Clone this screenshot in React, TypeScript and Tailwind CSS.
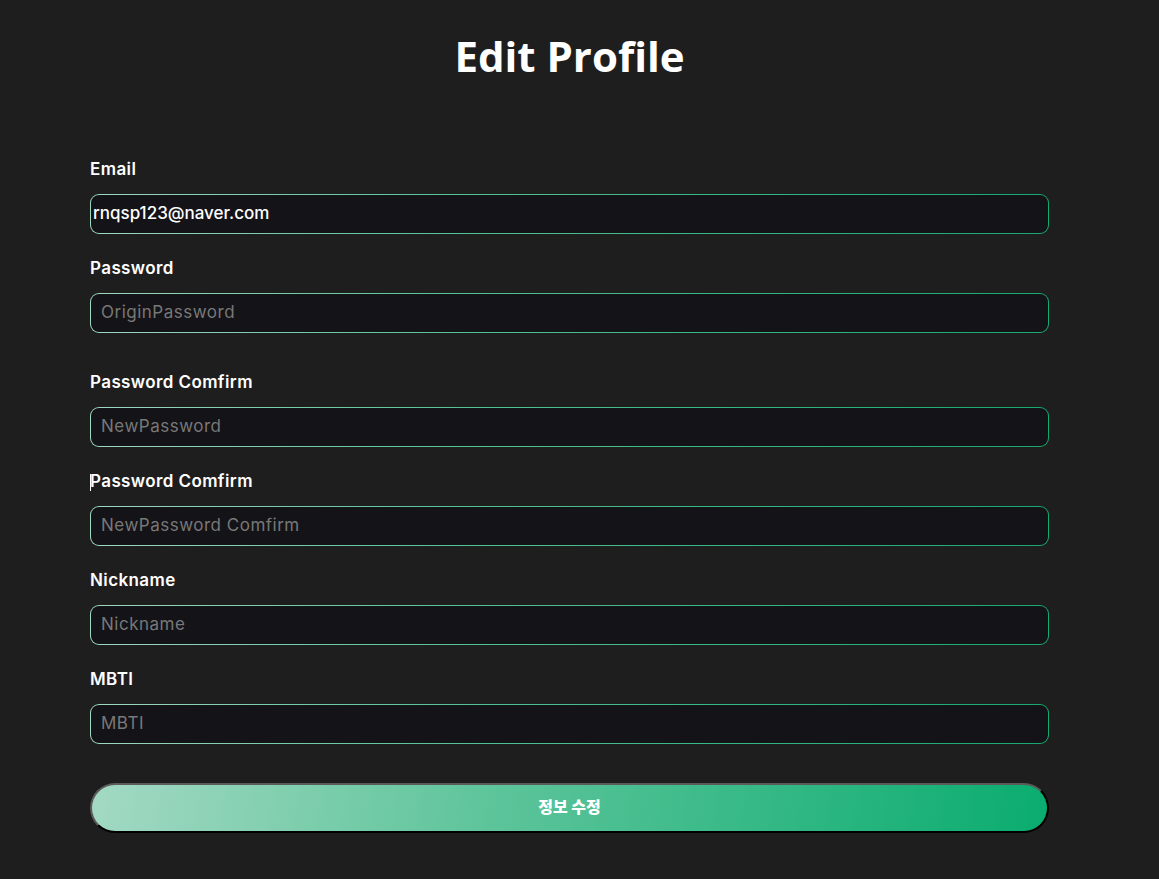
import React from "react";

const font = { fontFamily: '"Inter", "Noto Sans CJK KR", sans-serif' };

function Field({
  label,
  placeholder,
  value,
  caret,
  className = "",
}: {
  label: string;
  placeholder?: string;
  value?: string;
  caret?: boolean;
  className?: string;
}) {
  return (
    <div className={"flex flex-col " + className}>
      <div className="relative h-[20px] text-[17px] leading-[20px] font-semibold text-white mb-[15px] tracking-[0.4px]">
        {caret && <span className="absolute left-0 top-[3px] h-[17px] w-px bg-white" />}
        {label}
      </div>
      <div className="rounded-[9px] p-px bg-[linear-gradient(90deg,#9fd8c1,#52c393_40%,#16a96f)]">
        <div className="h-[38px] rounded-[8px] bg-[#141317] flex items-center">
          {value ? (
            <span className="pl-[2px] text-[17px] font-medium text-white">{value}</span>
          ) : (
            <span className="pl-[10px] text-[17px] tracking-[0.5px] text-[#787878]">{placeholder}</span>
          )}
        </div>
      </div>
    </div>
  );
}

export default function App() {
  return (
    <div className="min-h-[879px] w-full bg-[#1e1e1e]" style={font}>
      <div className="w-[959px] ml-[90px] flex flex-col">
        <h1
          className="text-center text-[42px] font-bold text-white pt-[28px] leading-[56px]"
          style={{ fontFamily: '"Open Sans", "Noto Sans", sans-serif' }}
        >
          Edit Profile
        </h1>
        <div className="mt-[75px] flex flex-col gap-[24px]">
          <Field label="Email" value="rnqsp123@naver.com" />
          <Field label="Password" placeholder="OriginPassword" />
          <Field label="Password Comfirm" placeholder="NewPassword" className="mt-[15px]" />
          <Field label="Password Comfirm" placeholder="NewPassword Comfirm" caret />
          <Field label="Nickname" placeholder="Nickname" />
          <Field label="MBTI" placeholder="MBTI" />
        </div>
        <button
          className="mt-[39px] h-[50px] w-full rounded-full border-2 border-t-[#5a5a5a] border-l-[#5a5a5a] border-r-black border-b-black bg-[linear-gradient(100deg,#a3d9c3,#60c59c_40%,#0aac6f)] text-white text-[16px] font-extrabold pb-[5px]"
          style={{ fontFamily: '"Noto Sans CJK KR", sans-serif' }}
        >
          정보 수정
        </button>
      </div>
    </div>
  );
}
